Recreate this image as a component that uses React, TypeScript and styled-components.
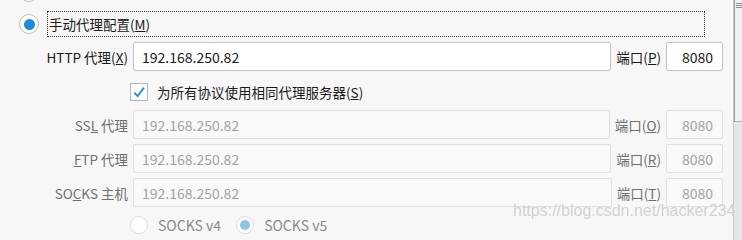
import React from "react";
import styled, { createGlobalStyle } from "styled-components";

const GlobalStyle = createGlobalStyle`
  html, body {
    margin: 0;
    padding: 0;
    background: #f7f7f7;
    overflow: hidden;
  }
  body {
    font-family: "Noto Sans CJK SC", "Noto Sans", sans-serif;
    font-size: 13.5px;
    color: #1a1a1a;
  }
`;

type Enabled = { $disabled?: boolean };

const proxies = [
  { key: "L", pre: "SS", post: " 代理", port: "O" },
  { key: "F", pre: "", post: "TP 代理", port: "R" },
  { key: "C", pre: "SO", post: "KS 主机", port: "T" },
];

export default function App() {
  return (
    <Frame>
      <GlobalStyle />
      <Content>
        <OptionRow>
          <Radio $checked={false} />
        </OptionRow>
        <OptionRow>
          <Radio $checked />
          <OptionLabel $focused>
            手动代理配置(<u>M</u>)
          </OptionLabel>
        </OptionRow>

        <ProxyRow $top={5}>
          <FieldLabel>
            HTTP 代理(<u>X</u>)
          </FieldLabel>
          <TextInput value="192.168.250.82" readOnly />
          <PortLabel>
            端口(<u>P</u>)
          </PortLabel>
          <PortInput value="8080" readOnly />
        </ProxyRow>

        <CheckRow>
          <CheckBox>
            <svg width="16" height="16" viewBox="0 0 16 16">
              <path d="M3.2 8.6 L6.6 12 L13 3.6" fill="none" stroke="#2b8ddc" strokeWidth="1.9" />
            </svg>
          </CheckBox>
          <span>
            为所有协议使用相同代理服务器(<u>S</u>)
          </span>
        </CheckRow>

        {proxies.map((p, i) => (
          <ProxyRow key={p.port} $top={i === 0 ? 9 : 5}>
            <FieldLabel $disabled>
              {p.pre}
              <u>{p.key}</u>
              {p.post}
            </FieldLabel>
            <TextInput $disabled value="192.168.250.82" readOnly />
            <PortLabel $disabled>
              端口(<u>{p.port}</u>)
            </PortLabel>
            <PortInput $disabled value="8080" readOnly />
          </ProxyRow>
        ))}

        <VersionRow>
          <SmallRadio $checked={false} />
          <VersionLabel>SOCKS v4</VersionLabel>
          <SmallRadio $checked />
          <VersionLabel>SOCKS v5</VersionLabel>
        </VersionRow>

        <Watermark>https://blog.csdn.net/hacker234</Watermark>
      </Content>
      <Scrollbar>
        <Thumb />
        <Track />
      </Scrollbar>
    </Frame>
  );
}

const Frame = styled.div`
  display: flex;
  height: 100vh;
  width: 100vw;
  overflow: hidden;
`;

const Content = styled.div`
  position: relative;
  flex: 1;
  display: flex;
  flex-direction: column;
  margin-top: -21px;
  padding-right: 10px;
`;

const Scrollbar = styled.div`
  width: 8px;
  display: flex;
  flex-direction: column;
  border-left: 1px solid #c9c9c9;
`;

const Thumb = styled.div`
  height: 122px;
  box-sizing: border-box;
  border-left: 1px solid #9a9a9a;
  border-bottom: 1px solid #a8a8a8;
  background:
    repeating-linear-gradient(#8a8a8a 0 1px, transparent 1px 2px) 1px 3px / 6px 6px no-repeat,
    #f1f1f1;
`;

const Track = styled.div`
  flex: 1;
  background: #e6e6e6;
`;

const OptionRow = styled.div`
  display: flex;
  flex: none;
  align-items: center;
  height: 26px;
  margin-bottom: 6px;
  padding-left: 19px;
  gap: 8px;
  &:nth-child(2) {
    margin-bottom: 0;
  }
`;

const Radio = styled.span<{ $checked: boolean }>`
  box-sizing: border-box;
  width: 20px;
  height: 20px;
  border-radius: 50%;
  border: 1px solid #bdbdbd;
  background: #fff;
  display: flex;
  align-items: center;
  justify-content: center;
  &::after {
    content: "";
    width: 11px;
    height: 11px;
    border-radius: 50%;
    background: ${(p) => (p.$checked ? "#1e8bd8" : "transparent")};
  }
`;

const OptionLabel = styled.span<{ $focused?: boolean }>`
  flex: 1;
  margin-right: 18px;
  height: 26px;
  box-sizing: border-box;
  display: flex;
  align-items: center;
  padding-left: 1px;
  border: 1px dotted ${(p) => (p.$focused ? "#333" : "transparent")};
`;

const ProxyRow = styled.div<{ $top: number }>`
  display: flex;
  flex: none;
  align-items: center;
  gap: 5px;
  height: 29px;
  margin-top: ${(p) => p.$top}px;
`;

const FieldLabel = styled.span<Enabled>`
  width: 88px;
  margin-left: 40px;
  text-align: right;
  white-space: nowrap;
  color: ${(p) => (p.$disabled ? "#6f6f6f" : "#1a1a1a")};
`;

const TextInput = styled.input<Enabled>`
  box-sizing: border-box;
  height: 29px;
  border-radius: 2px;
  font-family: "Noto Sans CJK SC", "Noto Sans", sans-serif;
  font-size: 14px;
  outline: none;
  flex: 1;
  min-width: 0;
  padding: 0 0 0 8px;
  border: 1px solid ${(p) => (p.$disabled ? "#e0e0e0" : "#c3c3c3")};
  background: ${(p) => (p.$disabled ? "#f9f9f9" : "#fff")};
  color: ${(p) => (p.$disabled ? "#a3a3a3" : "#1a1a1a")};
`;

const PortLabel = styled.span<Enabled>`
  white-space: nowrap;
  color: ${(p) => (p.$disabled ? "#6f6f6f" : "#1a1a1a")};
`;

const PortInput = styled(TextInput)`
  flex: none;
  width: 57px;
  padding: 0 9px 0 0;
  text-align: right;
`;

const CheckRow = styled.div`
  display: flex;
  flex: none;
  align-items: center;
  gap: 9px;
  height: 18px;
  margin-top: 12px;
  padding-left: 130px;
`;

const CheckBox = styled.span`
  box-sizing: border-box;
  width: 18px;
  height: 18px;
  border: 1px solid #b5b5b5;
  background: #fff;
  display: flex;
  align-items: center;
  justify-content: center;
`;

const VersionRow = styled.div`
  display: flex;
  flex: none;
  align-items: center;
  height: 18px;
  margin-top: 9px;
  padding-left: 130px;
`;

const SmallRadio = styled(Radio)`
  width: 18px;
  height: 18px;
  border-color: #dcdcdc;
  &::after {
    width: 10px;
    height: 10px;
    background: ${(p) => (p.$checked ? "#8cc5e6" : "transparent")};
  }
`;

const VersionLabel = styled.span`
  color: #8a8a8a;
  font-size: 14px;
  margin: 0 15px 0 10px;
`;

const Watermark = styled.div`
  position: absolute;
  left: 513px;
  top: 223px;
  font-family: "Liberation Sans", Arial, sans-serif;
  font-size: 16px;
  color: rgba(170, 170, 170, 0.55);
  text-shadow: 0 0 1px rgba(255, 255, 255, 0.9);
  white-space: nowrap;
  pointer-events: none;
`;
